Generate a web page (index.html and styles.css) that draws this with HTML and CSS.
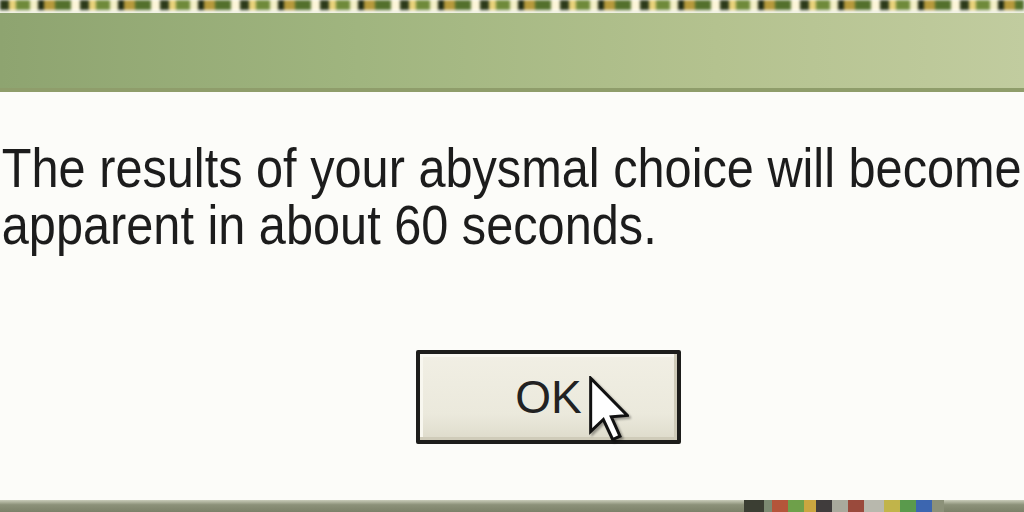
FILE: index.html
```html
<!DOCTYPE html>
<html lang="en">

<head>
    <meta charset="UTF-8">
    <meta name="viewport" content="width=device-width, initial-scale=1.0">
    <title>Message</title>
    <link rel="stylesheet" href="styles.css">
</head>

<body>
    <!-- Desktop icons peeking above the window -->
    <div class="desktop-strip"></div>

    <div class="window">
        <div class="titlebar"></div>

        <div class="content">
            <p class="message">The results of your abysmal choice will become<br>apparent in about 60 seconds.</p>

            <div class="actions">
                <button class="btn" type="button">OK</button>
                <!-- Mouse pointer resting on the button -->
                <svg class="pointer" width="40" height="66" viewBox="-0.5 -0.5 12 19.5">
                    <path d="M0 0 L0 16 L3.8 12.4 L6.6 18.4 L8.8 17.4 L6.2 11.6 L11 11.2 Z"
                        fill="#fff" stroke="#111" stroke-width="0.9" stroke-linejoin="miter" />
                </svg>
            </div>
        </div>
    </div>

    <!-- Taskbar edge -->
    <div class="taskbar">
        <div class="tray"></div>
    </div>
</body>

</html>
```

FILE: styles.css
```css
body {
    margin: 0;
    width: 1024px;
    height: 512px;
    overflow: hidden;
    display: flex;
    flex-direction: column;
    background-color: #fcfcf9;
    font-family: "Liberation Sans", Arial, sans-serif;
}

.desktop-strip {
    height: 10px;
    flex-shrink: 0;
    background:
        repeating-linear-gradient(90deg,
            #2c3a1a 0 9px, #e8d27a 9px 16px, #6f8a3a 16px 30px, #f4efc8 30px 38px,
            #1f2a14 38px 44px, #b79a3c 44px 55px, #53702c 55px 71px, #fdf6d9 71px 80px),
        #55703a;
    filter: blur(1.5px);
}

.window {
    flex: 1;
    display: flex;
    flex-direction: column;
    border-top: 3px solid #f1f2e6;
}

.titlebar {
    height: 75px;
    flex-shrink: 0;
    background: linear-gradient(90deg, #8ea470 0%, #a0b57f 35%, #b4c28f 70%, #c1cc9f 100%);
    border-bottom: 4px solid #8f9d6b;
    box-shadow: 0 2px 0 #dfe3c8;
}

.content {
    flex: 1;
    display: flex;
    flex-direction: column;
    padding-top: 48px;
    background-color: #fcfcf9;
}

.message {
    margin: 0;
    padding-left: 2px;
    font-size: 55px;
    line-height: 57px;
    color: #1c1c1c;
    white-space: nowrap;
    transform: scaleX(0.885);
    transform-origin: left top;
}

.actions {
    position: relative;
    display: flex;
    justify-content: center;
    margin-top: 96px;
    padding-left: 73px;
}

.btn {
    width: 265px;
    height: 94px;
    padding: 0;
    font-family: "Liberation Sans", Arial, sans-serif;
    font-size: 46px;
    color: #222;
    background: linear-gradient(180deg, #f1efe4 0%, #ebe9dc 70%, #dedbcb 100%);
    border: 4px solid #1d1d1b;
    border-radius: 2px;
    box-shadow: inset -3px -3px 0 #cfcbb9, inset 3px 3px 0 #f8f7ef;
}

.pointer {
    position: absolute;
    left: 589px;
    top: 26px;
    filter: drop-shadow(2px 2px 1px rgba(0, 0, 0, 0.35));
}

.taskbar {
    height: 12px;
    flex-shrink: 0;
    display: flex;
    justify-content: flex-end;
    background: linear-gradient(180deg, #c9ccb9 0%, #8c9179 40%, #7c8169 100%);
}

.tray {
    width: 200px;
    margin-right: 80px;
    background: linear-gradient(90deg,
            #3b3e33 0 10%, #7c8a72 10% 14%, #b4553a 14% 22%, #6ea04a 22% 30%, #caa640 30% 36%,
            #403c3c 36% 44%, #a9a99c 44% 52%, #9a4a3c 52% 60%, #b8b8ad 60% 70%, #c1b44a 70% 78%,
            #5a9a4c 78% 86%, #3c66b0 86% 94%, #8c9179 94%);
}
```
